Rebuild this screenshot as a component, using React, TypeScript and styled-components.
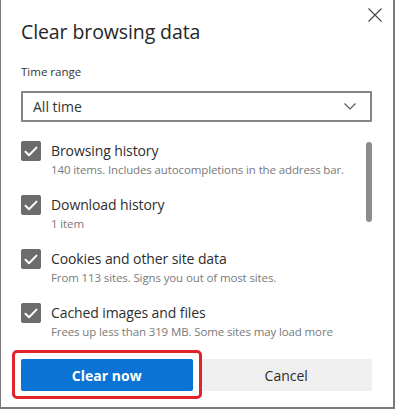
import styled, { createGlobalStyle } from "styled-components";

const Global = createGlobalStyle`
  html, body {
    margin: 0;
    padding: 0;
    background: #ffffff;
  }
  * {
    box-sizing: border-box;
  }
`;

const Dialog = styled.div`
  width: 395px;
  height: 409px;
  background: #fff;
  border-left: 1px solid #7a7a7a;
  border-right: 2px solid #7a7a7a;
  border-bottom: 2px solid #7a7a7a;
  padding: 0 21px 0 20px;
  font-family: "Open Sans", "Noto Sans", sans-serif;
  color: #2b2b2b;
  overflow: hidden;
`;

const Header = styled.div`
  display: flex;
  justify-content: space-between;
  align-items: flex-start;
  height: 58px;
`;

const Title = styled.h1`
  margin: 18px 0 0;
  font-size: 19.5px;
  line-height: 28px;
  font-weight: 400;
  color: #262626;
  letter-spacing: -0.1px;
`;

const Close = styled.button`
  border: 0;
  background: none;
  padding: 0;
  margin: 8px -10px 0 0;
  width: 14px;
  height: 14px;
  display: flex;
  cursor: pointer;
`;

const FieldLabel = styled.div`
  font-size: 11.5px;
  line-height: 16px;
  color: #333;
  margin: 6px 0 0;
`;

const Select = styled.div`
  margin-top: 11px;
  height: 31px;
  border: 2px solid #858585;
  border-radius: 1px;
  display: flex;
  align-items: center;
  justify-content: space-between;
  padding: 0 14px 0 10px;
  font-size: 14px;
  color: #333;
`;

const ListArea = styled.div`
  margin-top: 19px;
  height: 209px;
  display: flex;
  overflow: hidden;
`;

const Items = styled.div`
  flex: 1;
  display: flex;
  flex-direction: column;
`;

const Item = styled.label`
  display: grid;
  grid-template-columns: 20px 1fr;
  column-gap: 10px;
  height: 54px;
  flex-shrink: 0;
`;

const Box = styled.span`
  width: 20px;
  height: 20px;
  border-radius: 2px;
  background: #6c6c6c;
  display: flex;
  align-items: center;
  justify-content: center;
`;

const ItemText = styled.div`
  display: flex;
  flex-direction: column;
`;

const ItemTitle = styled.span`
  font-size: 14px;
  line-height: 20px;
  color: #2e2e2e;
  letter-spacing: -0.1px;
`;

const ItemSub = styled.span`
  font-size: 11.5px;
  line-height: 18px;
  color: #7a7a7a;
  white-space: nowrap;
  letter-spacing: -0.12px;
`;

const Track = styled.div`
  width: 6px;
`;

const Thumb = styled.div`
  width: 6px;
  height: 80px;
  margin-top: 1px;
  border-radius: 3px;
  background: #8c8c8c;
`;

const Footer = styled.div`
  display: grid;
  grid-template-columns: 1fr 1fr;
  gap: 8px;
  margin-top: 9px;
`;

const Highlight = styled.div`
  position: relative;
  &::after {
    content: "";
    position: absolute;
    top: -9px;
    left: -9px;
    right: -9px;
    bottom: -8px;
    border: 3px solid #e3232c;
    border-radius: 5px;
    pointer-events: none;
  }
`;

const Button = styled.button<{ $primary?: boolean }>`
  width: 100%;
  height: 32px;
  border: 0;
  border-radius: 2px;
  font-family: inherit;
  font-size: 14px;
  font-weight: ${(p) => (p.$primary ? 700 : 400)};
  background: ${(p) => (p.$primary ? "#0a73d3" : "#efefef")};
  color: ${(p) => (p.$primary ? "#ffffff" : "#2b2b2b")};
  cursor: pointer;
`;

const items = [
  { title: "Browsing history", sub: "140 items. Includes autocompletions in the address bar." },
  { title: "Download history", sub: "1 item" },
  { title: "Cookies and other site data", sub: "From 113 sites. Signs you out of most sites." },
  { title: "Cached images and files", sub: "Frees up less than 319 MB. Some sites may load more" },
];

function Check() {
  return (
    <svg width="14" height="11" viewBox="0 0 14 11">
      <path d="M1.5 5.8 L5 9.2 L12.5 1.6" fill="none" stroke="#fff" strokeWidth="2" strokeLinecap="round" strokeLinejoin="round" />
    </svg>
  );
}

export default function App() {
  return (
    <>
      <Global />
      <Dialog>
        <Header>
          <Title>Clear browsing data</Title>
          <Close aria-label="Close">
            <svg width="14" height="14" viewBox="0 0 14 14">
              <path d="M0.5 0.5 L13.5 13.5 M13.5 0.5 L0.5 13.5" stroke="#444" strokeWidth="1.1" />
            </svg>
          </Close>
        </Header>
        <FieldLabel>Time range</FieldLabel>
        <Select>
          <span>All time</span>
          <svg width="12" height="7" viewBox="0 0 12 7">
            <path d="M0.5 0.5 L6 6 L11.5 0.5" fill="none" stroke="#555" strokeWidth="1.1" />
          </svg>
        </Select>
        <ListArea>
          <Items>
            {items.map((it) => (
              <Item key={it.title}>
                <Box>
                  <Check />
                </Box>
                <ItemText>
                  <ItemTitle>{it.title}</ItemTitle>
                  <ItemSub>{it.sub}</ItemSub>
                </ItemText>
              </Item>
            ))}
          </Items>
          <Track>
            <Thumb />
          </Track>
        </ListArea>
        <Footer>
          <Highlight>
            <Button $primary>Clear now</Button>
          </Highlight>
          <Button>Cancel</Button>
        </Footer>
      </Dialog>
    </>
  );
}
